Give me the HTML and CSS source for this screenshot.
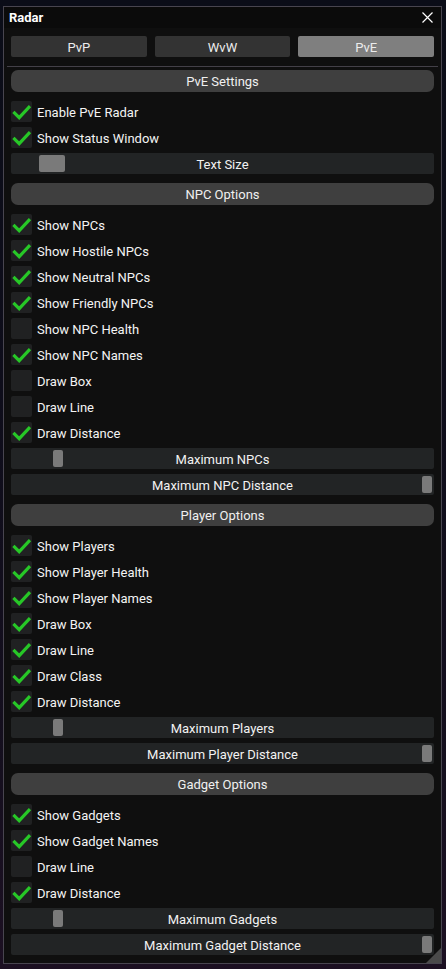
FILE: index.html
```html
<!DOCTYPE html>
<html>
<head>
<meta charset="utf-8">
<link rel="stylesheet" href="styles.css">
</head>
<body>
<div class="win">
  <div class="titlebar">
    <span class="title">Radar</span>
    <svg class="close" width="11" height="11" viewBox="0 0 11 11"><path d="M0.5 0.5L10.5 10.5M10.5 0.5L0.5 10.5" stroke="#fff" stroke-width="1.2"/></svg>
  </div>
  <div class="content">
    <div class="tabs">
      <div class="tab">PvP</div>
      <div class="tab">WvW</div>
      <div class="tab active">PvE</div>
    </div>
    <div class="sep"></div>

    <div class="header first">PvE Settings</div>
    <div class="row"><span class="cb on"></span>Enable PvE Radar</div>
    <div class="row"><span class="cb on"></span>Show Status Window</div>
    <div class="slider"><span class="grab wide" style="left:28px"></span>Text Size</div>

    <div class="header">NPC Options</div>
    <div class="row"><span class="cb on"></span>Show NPCs</div>
    <div class="row"><span class="cb on"></span>Show Hostile NPCs</div>
    <div class="row"><span class="cb on"></span>Show Neutral NPCs</div>
    <div class="row"><span class="cb on"></span>Show Friendly NPCs</div>
    <div class="row"><span class="cb"></span>Show NPC Health</div>
    <div class="row"><span class="cb on"></span>Show NPC Names</div>
    <div class="row"><span class="cb"></span>Draw Box</div>
    <div class="row"><span class="cb"></span>Draw Line</div>
    <div class="row"><span class="cb on"></span>Draw Distance</div>
    <div class="slider"><span class="grab" style="left:42px"></span>Maximum NPCs</div>
    <div class="slider"><span class="grab" style="left:411px"></span>Maximum NPC Distance</div>

    <div class="header">Player Options</div>
    <div class="row"><span class="cb on"></span>Show Players</div>
    <div class="row"><span class="cb on"></span>Show Player Health</div>
    <div class="row"><span class="cb on"></span>Show Player Names</div>
    <div class="row"><span class="cb on"></span>Draw Box</div>
    <div class="row"><span class="cb on"></span>Draw Line</div>
    <div class="row"><span class="cb on"></span>Draw Class</div>
    <div class="row"><span class="cb on"></span>Draw Distance</div>
    <div class="slider"><span class="grab" style="left:42px"></span>Maximum Players</div>
    <div class="slider"><span class="grab" style="left:411px"></span>Maximum Player Distance</div>

    <div class="header">Gadget Options</div>
    <div class="row"><span class="cb on"></span>Show Gadgets</div>
    <div class="row"><span class="cb on"></span>Show Gadget Names</div>
    <div class="row"><span class="cb"></span>Draw Line</div>
    <div class="row"><span class="cb on"></span>Draw Distance</div>
    <div class="slider"><span class="grab" style="left:42px"></span>Maximum Gadgets</div>
    <div class="slider"><span class="grab" style="left:411px"></span>Maximum Gadget Distance</div>
  </div>
  <div class="grip"></div>
</div>
</body>
</html>
```
FILE: styles.css
```css
html, body {
  margin: 0;
  padding: 0;
}
body {
  width: 446px;
  height: 969px;
  overflow: hidden;
  background: linear-gradient(180deg, #0b0d18 0%, #0e0d1a 40%, #150f1e 80%, #1c1022 100%);
  font-family: Roboto, "Noto Sans", sans-serif;
  font-size: 13px;
  color: #f4f4f4;
}
.win {
  position: relative;
  box-sizing: border-box;
  margin: 6px 0 0 3px;
  width: 439px;
  height: 958px;
  border: 1px solid #48454f;
  background: #0f0f0f;
}
.titlebar {
  height: 21px;
  background: #0b0b0b;
  display: flex;
  align-items: center;
  justify-content: space-between;
  padding: 0 7px 0 5px;
}
.title {
  font-weight: 700;
  font-size: 13px;
  color: #fff;
}
.close {
  display: block;
  margin-right: 1px;
}
.content {
  padding: 8px 7px 0 7px;
  display: flex;
  flex-direction: column;
}
.tabs {
  display: flex;
  gap: 8px;
  height: 21px;
}
.tab {
  flex: 1;
  box-sizing: border-box;
  padding-top: 1px;
  background: #333333;
  border-radius: 2px;
  display: flex;
  align-items: center;
  justify-content: center;
  color: #ececec;
}
.tab.active {
  background: #7f7f7f;
}
.sep {
  height: 1px;
  background: #434048;
  margin: 9px -4px 0 -4px;
}
.header {
  box-sizing: border-box;
  height: 22px;
  padding-top: 1px;
  margin-top: 9px;
  background: #3f3f3f;
  border-radius: 7px;
  display: flex;
  align-items: center;
  justify-content: center;
  color: #f0f0f0;
}
.header.first {
  margin-top: 3px;
}
.row {
  box-sizing: border-box;
  height: 21px;
  padding-top: 2px;
  margin-top: 5px;
  display: flex;
  align-items: center;
}
.header + .row {
  margin-top: 9px;
}
.cb {
  width: 21px;
  height: 21px;
  align-self: flex-start;
  margin-top: -2px;
  border-radius: 2px;
  background-color: #202122;
  margin-right: 5px;
  flex: none;
}
.cb.on {
  background-image: url("data:image/svg+xml;utf8,<svg xmlns='http://www.w3.org/2000/svg' width='21' height='21' viewBox='0 0 21 21'><polyline points='2.4,10.8 8.2,16.6 19,5.2' fill='none' stroke='%2327c727' stroke-width='3.2'/></svg>");
  background-repeat: no-repeat;
}
.slider {
  position: relative;
  box-sizing: border-box;
  height: 21px;
  padding-top: 2px;
  margin-top: 5px;
  background: #222425;
  border-radius: 2px;
  display: flex;
  align-items: center;
  justify-content: center;
  color: #f2f2f2;
}
.grab {
  position: absolute;
  top: 2px;
  width: 10px;
  height: 17px;
  border-radius: 2px;
  background: #7a7a7a;
}
.grab.wide {
  width: 26px;
}
.grip {
  position: absolute;
  right: 0;
  bottom: 0;
  width: 0;
  height: 0;
  border-style: solid;
  border-width: 0 0 15px 15px;
  border-color: transparent transparent #4a4a4a transparent;
}
```
